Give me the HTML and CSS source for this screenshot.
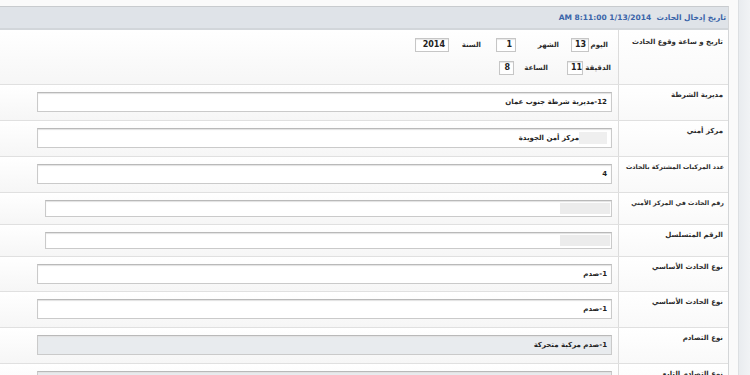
FILE: index.html
```html
<!DOCTYPE html>
<html lang="ar">
<head>
<meta charset="utf-8">
<link rel="stylesheet" href="styles.css">
</head>
<body>
<div class="page">
  <div class="panel" dir="rtl">
    <div class="head">تاريخ إدخال الحادث&nbsp;&nbsp;<span dir="ltr">AM 8:11:00 1/13/2014</span></div>
    <div class="row row-date">
      <div class="lbl">تاريخ و ساعة وقوع الحادث</div>
      <div class="fld">
        <div class="dline">
          <span class="dl d-day">اليوم</span><span class="box b-day">13</span>
          <span class="dl d-mon">الشهر</span><span class="box b-mon">1</span>
          <span class="dl d-yr">السنة</span><span class="box b-yr">2014</span>
        </div>
        <div class="dline">
          <span class="dl d-min">الدقيقة</span><span class="box b-min">11</span>
          <span class="dl d-hr">الساعة</span><span class="box b-hr">8</span>
        </div>
      </div>
    </div>
    <div class="row r36">
      <div class="lbl">مديرية الشرطة</div>
      <div class="fld"><div class="inp">12-مديرية شرطة جنوب عمان</div></div>
    </div>
    <div class="row r36">
      <div class="lbl">مركز أمني</div>
      <div class="fld"><div class="inp"><span class="ph"></span>مركز أمن الجويدة</div></div>
    </div>
    <div class="row r36">
      <div class="lbl tight">عدد المركبات المشتركة بالحادث</div>
      <div class="fld"><div class="inp">4</div></div>
    </div>
    <div class="row r32">
      <div class="lbl tight">رقم الحادث في المركز الأمني</div>
      <div class="fld narrow"><div class="inp sm"><span class="ph wide"></span></div></div>
    </div>
    <div class="row r32">
      <div class="lbl">الرقم المتسلسل</div>
      <div class="fld narrow"><div class="inp sm"><span class="ph wide"></span></div></div>
    </div>
    <div class="row r35">
      <div class="lbl">نوع الحادث الأساسي</div>
      <div class="fld"><div class="inp">1-صدم</div></div>
    </div>
    <div class="row r36">
      <div class="lbl">نوع الحادث الأساسي</div>
      <div class="fld"><div class="inp">1-صدم</div></div>
    </div>
    <div class="row r36">
      <div class="lbl">نوع التصادم</div>
      <div class="fld"><div class="inp grey">1-صدم مركبة متحركة</div></div>
    </div>
    <div class="row r36">
      <div class="lbl">نوع التصادم التابع</div>
      <div class="fld"><div class="inp grey"></div></div>
    </div>
  </div>
  <div class="side"></div>
</div>
</body>
</html>
```
FILE: styles.css
```css
html, body {
  margin: 0;
  padding: 0;
  background: #fafafa;
  font-family: "DejaVu Sans", sans-serif;
}
.page {
  display: flex;
  height: 375px;
  overflow: hidden;
  padding-top: 6px;
  box-sizing: border-box;
}
.panel {
  width: 729px;
  flex: none;
  margin-right: 9px;
  border-top: 1px solid #c8cbce;
  border-right: 1px solid #d4d6d8;
  box-sizing: border-box;
  background: #f9f9f9;
}
.side {
  flex: 1;
  margin-top: -6px;
  background: linear-gradient(90deg, #e9ecef, #f1f3f5);
  border-left: 1px solid #dcdfe2;
}
.head {
  height: 23px;
  box-sizing: border-box;
  line-height: 21px;
  background: #dfe3e8;
  border-bottom: 2px solid #d2d6da;
  color: #3a64a8;
  font-size: 7.5px;
  font-weight: bold;
  padding-right: 2px;
  white-space: nowrap;
}
.row {
  display: grid;
  grid-template-columns: 110px 1fr;
  box-sizing: border-box;
  border-bottom: 1px solid #e0e0e0;
  background: linear-gradient(#ffffff, #f6f6f6);
}
.row-date { height: 55px; }
.r36 { height: 36px; }
.r35 { height: 35px; }
.r32 { height: 32px; }
.lbl {
  border-left: 1px solid #dcdcdc;
  font-size: 7px;
  font-weight: bold;
  color: #2b2b2b;
  padding: 4px 5px 0 0;
  line-height: 12px;
  white-space: nowrap;
  background: linear-gradient(#ffffff, #f9f9f9);
}
.lbl.tight { font-size: 6.3px; padding-right: 4px; }
.row-date .lbl { padding-top: 6px; }
.fld {
  padding: 7px 6px 0 37px;
  background: linear-gradient(#ffffff, #f6f6f6);
}
.fld.narrow {
  padding: 7px 6px 0 45px;
}
.inp {
  height: 20px;
  box-sizing: border-box;
  border: 1px solid #cacaca;
  border-top-color: #b9b9b9;
  box-shadow: inset 0 1px 1px #e2e2e2;
  background: #fff;
  font-size: 7px;
  font-weight: bold;
  color: #1e1e1e;
  padding-right: 4px;
  display: flex;
  align-items: center;
  white-space: nowrap;
}
.inp.sm { height: 17px; padding-right: 1px; }
.inp.grey { background: #e8ebee; }
.ph {
  display: inline-block;
  width: 28px;
  height: 12px;
  background: #efefef;
}
.ph.wide { width: 50px; height: 11px; background: #ececec; }
.row-date .fld { padding: 8px 0 0 0; }
.dline {
  display: flex;
  align-items: center;
  height: 14px;
  margin-bottom: 9px;
  font-size: 7px;
  font-weight: bold;
  color: #2b2b2b;
  white-space: nowrap;
}
.box {
  display: inline-block;
  height: 14px;
  box-sizing: border-box;
  border: 1px solid #c6c6c6;
  box-shadow: inset 0 1px 1px #e6e6e6;
  background: #fff;
  font-size: 8px;
  line-height: 12px;
  padding: 0 3px;
  direction: ltr;
  text-align: right;
  color: #222;
}
.dl { display: inline-block; box-sizing: border-box; }
.d-day { width: 29px; padding-right: 10px; }
.b-day { width: 18px; }
.d-mon { width: 55px; padding-right: 12px; }
.b-mon { width: 20px; }
.d-yr { width: 47px; padding-right: 15px; }
.b-yr { width: 34px; }
.d-min { width: 35px; padding-right: 7px; }
.b-min { width: 16px; }
.d-hr { width: 53px; padding-right: 19px; }
.b-hr { width: 15px; }
```
